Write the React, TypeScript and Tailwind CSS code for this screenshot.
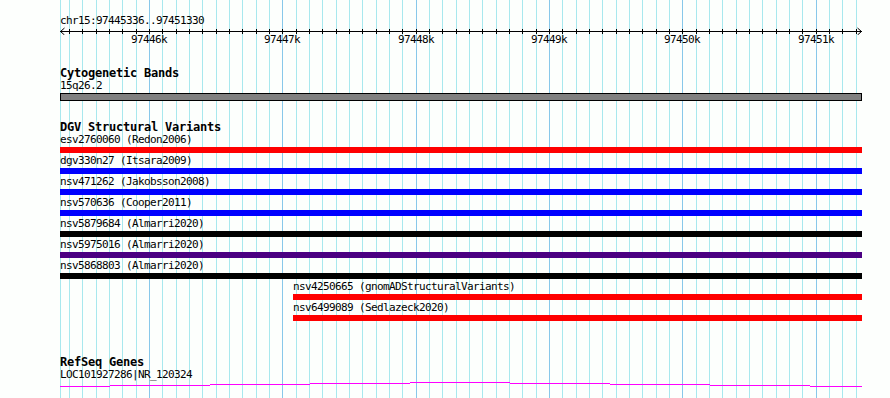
import React from 'react';

// 1 kb is ~133.4 px on this track; 97446k falls on x=149
const px = (bp: number) => Math.round(149 + (bp - 97446000) * 0.13336);

const ticks: number[] = [];
for (let bp = 97445400; bp <= 97451300; bp += 100) ticks.push(bp);

const majors = [97446000, 97447000, 97448000, 97449000, 97450000, 97451000];

const variants = [
  { label: 'esv2760060 (Redon2006)', bar: 'bg-[#ff0000]', late: false },
  { label: 'dgv330n27 (Itsara2009)', bar: 'bg-[#0000ff]', late: false },
  { label: 'nsv471262 (Jakobsson2008)', bar: 'bg-[#0000ff]', late: false },
  { label: 'nsv570636 (Cooper2011)', bar: 'bg-[#0000ff]', late: false },
  { label: 'nsv5879684 (Almarri2020)', bar: 'bg-black', late: false },
  { label: 'nsv5975016 (Almarri2020)', bar: 'bg-[#4b0082]', late: false },
  { label: 'nsv5868803 (Almarri2020)', bar: 'bg-black', late: false },
  { label: 'nsv4250665 (gnomADStructuralVariants)', bar: 'bg-[#ff0000]', late: true },
  { label: 'nsv6499089 (Sedlazeck2020)', bar: 'bg-[#ff0000]', late: true },
];

// intron hat of the gene, drawn as stepped segments
const hat = [
  [60, 110, 4], [110, 210, 3], [210, 310, 2], [310, 410, 1], [410, 510, 0],
  [510, 610, 1], [610, 710, 2], [710, 810, 3], [810, 862, 4],
];

const label = "h-[14px] leading-[14px] text-[11px] tracking-[-0.62px] whitespace-nowrap";
const title = "h-[13px] leading-[15px] text-[12px] font-bold tracking-[-0.22px] whitespace-nowrap";

const App: React.FC = () => {
  return (
    <div className="relative w-[890px] h-[398px] overflow-hidden bg-[#fdfffd] text-black font-['DejaVu_Sans_Mono','Liberation_Mono',monospace]">
      {/* grid */}
      <svg className="absolute inset-0" width={890} height={398} shapeRendering="crispEdges">
        <rect x={60} y={0} width={1} height={398} fill="#a8e8ee" />
        {ticks.map(bp => (
          <rect key={bp} x={px(bp)} y={0} width={1} height={398} fill={bp % 1000 === 0 ? '#88c8ea' : '#a8e8ee'} />
        ))}
      </svg>

      <div className="relative ml-[60px] w-[802px] pt-[14px]">
        <div className="h-[13px] leading-[14px] text-[11px] tracking-[-0.62px] whitespace-nowrap">chr15:97445336..97451330</div>

        {/* ruler */}
        <div className="relative h-[20px]">
          <svg className="absolute left-0 top-0" width={802} height={8} shapeRendering="crispEdges">
            <rect x={0} y={4} width={802} height={1} fill="#000" />
            {ticks.map(bp => (
              <rect key={bp} x={px(bp) - 60} y={2} width={1} height={5} fill="#000" />
            ))}
          </svg>
          <svg className="absolute left-0 top-0" width={802} height={8}>
            <polyline points="4.5,1 0.5,4.5 4.5,8" fill="none" stroke="#000" strokeWidth={1} />
            <polyline points="797.5,1 801.5,4.5 797.5,8" fill="none" stroke="#000" strokeWidth={1} />
          </svg>
          {majors.map(bp => (
            <div key={bp} className={`absolute top-[6px] w-[40px] text-center ${label}`} style={{ left: px(bp) - 60 - 20 }}>
              {bp / 1000}k
            </div>
          ))}
        </div>

        <div className={`mt-[19px] ${title}`}>Cytogenetic Bands</div>
        <div className={label}>15q26.2</div>
        <div className="h-[8px] border border-black bg-[#808080]" />

        <div className={`mt-[19px] ${title}`}>DGV Structural Variants</div>
        {variants.map(v => (
          <div key={v.label} className={v.late ? 'ml-[233px] mb-[1px]' : 'mb-[1px]'}>
            <div className={label}>{v.label}</div>
            <div className={`h-[6px] ${v.bar}`} />
          </div>
        ))}

        <div className={`mt-[34px] ${title}`}>RefSeq Genes</div>
        <div className={label}>LOC101927286|NR_120324</div>
        <svg className="block" width={802} height={6} shapeRendering="crispEdges">
          {hat.map(([a, b, y]) => (
            <rect key={a} x={a - 60} y={y} width={b - a} height={1} fill="#ff00ff" />
          ))}
        </svg>
      </div>
    </div>
  );
};

export default App;
